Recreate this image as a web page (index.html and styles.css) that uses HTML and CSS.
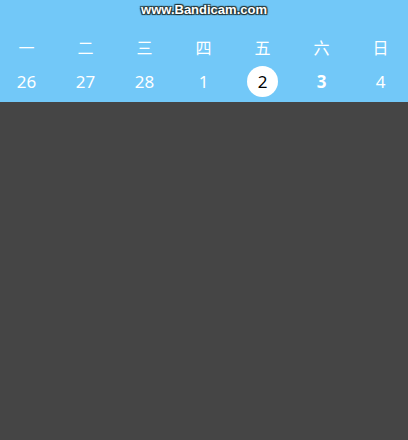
FILE: index.html
```html
<!DOCTYPE html>
<html lang="zh">
<head>
<meta charset="utf-8">
<link rel="stylesheet" href="styles.css">
</head>
<body>
<div class="header">
  <div class="watermark">www.Bandicam.com</div>
  <div class="row weekdays">
    <span>一</span><span>二</span><span>三</span><span>四</span><span>五</span><span>六</span><span>日</span>
  </div>
  <div class="row days">
    <span>26</span><span>27</span><span>28</span><span>1</span><span><b class="today">2</b></span><span class="bold">3</span><span>4</span>
  </div>
</div>
</body>
</html>
```
FILE: styles.css
```css
html, body {
  margin: 0;
  padding: 0;
  background: #454545;
  height: 100%;
  overflow: hidden;
}
body {
  font-family: "Noto Sans", "Noto Sans CJK SC", sans-serif;
}
.header {
  background: #72c8f8;
  height: 102px;
  display: flex;
  flex-direction: column;
  overflow: hidden;
}
.watermark {
  height: 20px;
  line-height: 19px;
  text-align: center;
  color: #fff;
  font-family: "Liberation Sans", sans-serif;
  font-weight: bold;
  font-size: 13px;
  text-shadow: 0 0 1px #233, 1px 1px 1px #233, -1px -1px 1px #233, 1px -1px 1px #233, -1px 1px 1px #233;
}
.row {
  display: grid;
  grid-template-columns: repeat(7, 59px);
  margin-left: -3px;
  color: #fff;
  text-align: center;
}
.row span {
  display: flex;
  align-items: center;
  justify-content: center;
}
.weekdays {
  height: 34px;
  margin-top: 10px;
  font-family: "Noto Sans CJK SC", sans-serif;
  font-size: 16px;
  font-weight: 400;
}
.days {
  height: 33px;
  padding-top: 1px;
  font-size: 17px;
}
.today {
  width: 31px;
  height: 31px;
  border-radius: 50%;
  background: #fff;
  color: #000;
  font-weight: normal;
  display: flex;
  align-items: center;
  justify-content: center;
}
.bold {
  font-weight: bold;
}
```
